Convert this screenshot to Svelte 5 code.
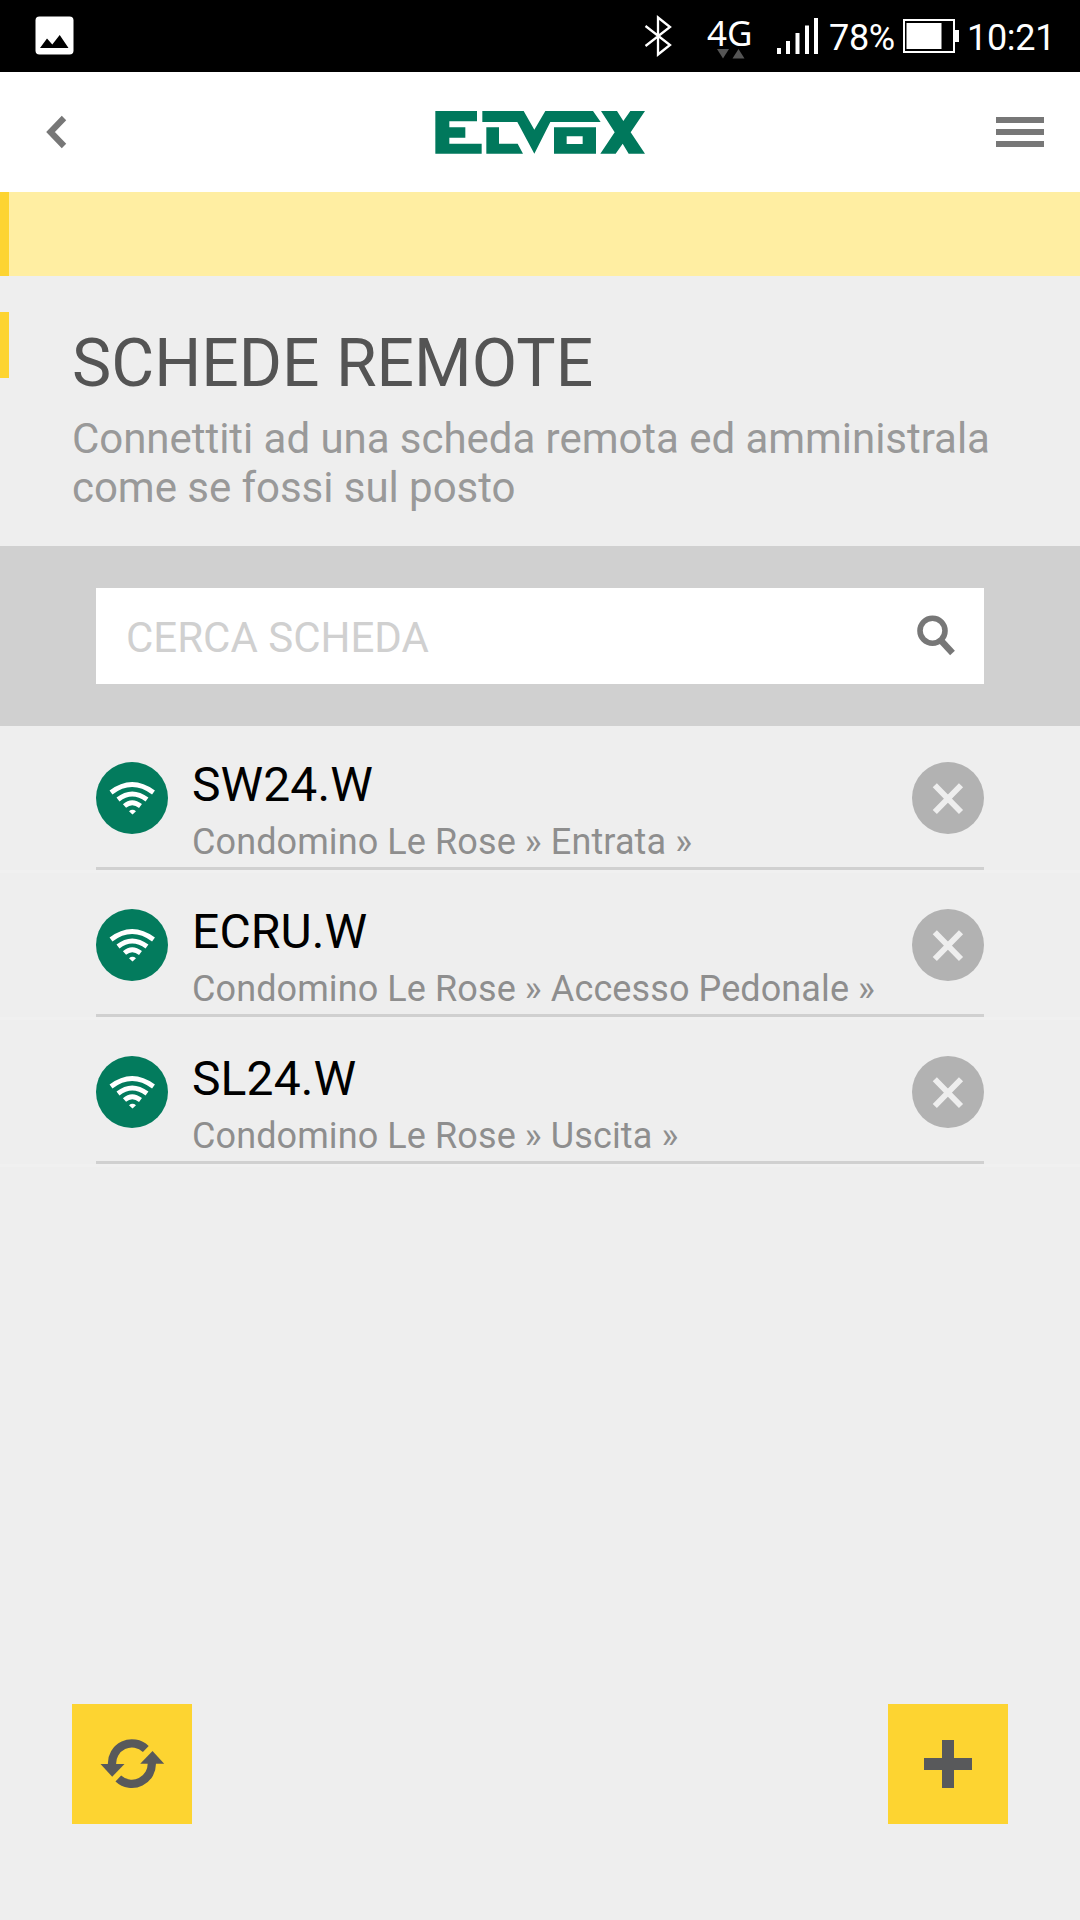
<script>
  const boards = [
    { name: 'SW24.W', place: 'Condomino Le Rose » Entrata »' },
    { name: 'ECRU.W', place: 'Condomino Le Rose » Accesso Pedonale »' },
    { name: 'SL24.W', place: 'Condomino Le Rose » Uscita »' }
  ];
</script>

<div class="screen">
  <div class="status">
    <svg class="picture" width="40" height="40" viewBox="0 0 40 40">
      <rect x="0.5" y="0.5" width="38" height="38" rx="4" fill="#fff" />
      <path d="M5 32L12 22.5L17.3 28.5L24.7 19L33.5 32Z" fill="#000" />
    </svg>
    <svg class="bluetooth" width="28" height="42" viewBox="0 0 28 42" fill="none" stroke="#fff" stroke-width="2.300">
      <path d="M1.500 11L26 30L14 39.500V2.500L26 12L1.500 31" />
    </svg>
    <div class="network">
      <span class="gen">4G</span>
      <svg class="arrows" width="28" height="10" viewBox="0 0 28 10" fill="#555">
        <path d="M0 0H12L6 9.500Z" />
        <path d="M15.500 9.500H27.500L21.500 0Z" />
      </svg>
    </div>
    <svg class="signal" width="42" height="36" viewBox="0 0 42 36" fill="#fff">
      <rect x="0" y="30" width="4" height="6" />
      <rect x="9" y="23" width="4" height="13" />
      <rect x="18.500" y="15" width="4" height="21" />
      <rect x="28" y="7.500" width="4" height="28.500" />
      <rect x="37" y="0" width="4" height="36" />
    </svg>
    <span class="percent">78%</span>
    <svg class="battery" width="56" height="34" viewBox="0 0 56 34">
      <rect x="1" y="1" width="50" height="32" fill="none" stroke="#fff" stroke-width="2" />
      <rect x="3.500" y="4" width="35" height="26" fill="#fff" />
      <rect x="52" y="11" width="4" height="12" fill="#fff" />
    </svg>
    <span class="clock">10:21</span>
  </div>

  <header>
    <svg class="back" width="24" height="36" viewBox="0 0 24 36" fill="none" stroke="#777" stroke-width="6.200">
      <path d="M20 4L6.500 18L20 32" />
    </svg>
    <svg class="logo" width="212" height="46" viewBox="44 60 636 138" fill="#00785c" role="img" aria-label="Elvox">
      <path d="M45 63H170V94H87V112H135V143H87V161H184V191H45Z" />
      <path d="M186 63H310L342 119L375 63H518L541 96H390L342 191L291 96H186Z" />
      <path d="M198 112H236V161H292L308 191H198Z" />
      <path fill-rule="evenodd" d="M401 112H527V191H401ZM439 139V162H487V139Z" />
      <path d="M542 63H590L609 93L630 63H674L631 127L674 191H625L607 161L586 191H540L583 127Z" />
    </svg>
    <svg class="menu" width="48" height="30" viewBox="0 0 48 30" fill="#777">
      <path d="M0 0H48V6H0ZM0 12H48V18H0ZM0 24H48V30H0Z" />
    </svg>
  </header>

  <div class="notice"></div>

  <section class="intro">
    <div class="marker"></div>
    <div class="copy">
      <h1>SCHEDE REMOTE</h1>
      <p>Connettiti ad una scheda remota ed amministrala<br />come se fossi sul posto</p>
    </div>
  </section>

  <div class="search">
    <div class="field">
      <span>CERCA SCHEDA</span>
      <svg width="40" height="42" viewBox="0 0 40 42" fill="none" stroke="#777">
        <circle cx="15.500" cy="15.700" r="12.500" stroke-width="5.600" />
        <path d="M23.500 25L35.500 38" stroke-width="6.500" />
      </svg>
    </div>
  </div>

  <div class="list">
    {#each boards as board}
      <div class="item">
        <div class="row">
          <svg width="72" height="72" viewBox="0 0 72 72">
            <circle cx="36" cy="36" r="36" fill="#037b5d" />
            <g fill="none" stroke="#fff" stroke-width="4.800">
              <path d="M15 30.500Q36 14.500 57.500 30.500" />
              <path d="M22 37.500Q36 26.500 51 37.500" />
              <path d="M28.500 44Q36 37.500 44.500 44" />
            </g>
            <path d="M33 49.200Q36.500 46.500 40 49.200L36.500 52.500Z" fill="#fff" />
          </svg>
          <div class="text">
            <div class="name">{board.name}</div>
            <div class="place">{board.place}</div>
          </div>
          <svg width="72" height="72" viewBox="0 0 72 72">
            <circle cx="36" cy="36" r="36" fill="#b2b2b2" />
            <path d="M22.800 23.300L49 50M49 23.300L22.800 50" stroke="#eee" stroke-width="5.800" />
          </svg>
        </div>
      </div>
    {/each}
  </div>

  <div class="actions">
    <div class="btn">
      <svg width="66" height="50" viewBox="-0.500 0 66 50">
        <g fill="none" stroke="#58595b" stroke-width="8.300">
          <path d="M46.300 10A19.900 19.900 0 0 0 12.600 26" />
          <path d="M18.800 39.500A19.900 19.900 0 0 0 52.200 23" />
        </g>
        <path d="M1 25H25L12.700 37.700Z" fill="#58595b" />
        <path d="M40.700 24.700H64.700L53 12Z" fill="#58595b" />
      </svg>
    </div>
    <div class="btn">
      <svg width="48" height="48" viewBox="0 0 48 48">
        <path d="M18 0H30V18H48V30H30V48H18V30H0V18H18Z" fill="#58595b" />
      </svg>
    </div>
  </div>
</div>

<style>
  :global(body) {
    margin: 0;
  }
  .screen {
    width: 1080px;
    height: 1920px;
    background: #eee;
    font-family: Roboto, sans-serif;
    display: flex;
    flex-direction: column;
    overflow: hidden;
  }
  svg {
    display: block;
    flex: none;
  }
  span {
    white-space: nowrap;
  }
  .status {
    height: 72px;
    background: #000;
    color: #fff;
    display: flex;
    align-items: flex-start;
    padding-left: 35px;
    flex: none;
  }
  .picture {
    margin-top: 16px;
  }
  .bluetooth {
    margin: 15px 0 0 569px;
  }
  .network {
    width: 46px;
    margin: 13px 0 0 35px;
    display: flex;
    flex-direction: column;
  }
  .gen {
    font: 35px/40px "Noto Sans", sans-serif;
    height: 36px;
  }
  .arrows {
    margin-left: 10px;
  }
  .signal {
    margin: 18px 0 0 24px;
  }
  .percent,
  .clock {
    font-size: 36px;
    line-height: 42px;
    margin-top: 17px;
  }
  .percent {
    width: 64px;
    margin-left: 10px;
    letter-spacing: -0.3px;
  }
  .battery {
    margin: 19px 0 0 10px;
  }
  .clock {
    margin-left: 8px;
    letter-spacing: -0.3px;
  }
  header {
    height: 120px;
    background: #fff;
    display: flex;
    align-items: flex-start;
    flex: none;
    padding-left: 44px;
  }
  .back {
    margin-top: 42px;
  }
  .logo {
    margin: 38px 0 0 367px;
  }
  .menu {
    margin: 45px 0 0 349px;
  }
  .notice {
    height: 84px;
    flex: none;
    box-sizing: border-box;
    background: #ffeea2;
    border-left: 9px solid #fdd431;
  }
  .intro {
    height: 270px;
    flex: none;
    display: flex;
  }
  .marker {
    width: 9px;
    height: 66px;
    margin-top: 36px;
    background: #fdd431;
  }
  .copy {
    margin: 49px 0 0 63px;
  }
  h1 {
    margin: 0;
    font-size: 66px;
    line-height: 78px;
    font-weight: 400;
    color: #545454;
  }
  p {
    margin: 11px 0 0;
    font-size: 42px;
    line-height: 49px;
    letter-spacing: -0.04px;
    color: #999;
    white-space: nowrap;
  }
  .search {
    height: 96px;
    padding: 42px 96px;
    background: #d0d0d0;
    flex: none;
  }
  .field {
    height: 96px;
    background: #fff;
    display: flex;
    align-items: center;
    justify-content: space-between;
    padding: 0 27px 0 30px;
    font-size: 42px;
    color: #d0d0d0;
  }
  .field span {
    padding-top: 2px;
  }
  .item {
    height: 144px;
    padding: 0 96px;
    border-bottom: 3px solid #f0f0f0;
  }
  .row {
    height: 141px;
    border-bottom: 3px solid #d0d0d0;
    display: flex;
  }
  .row svg {
    margin-top: 36px;
  }
  .text {
    flex: 1;
    padding: 31px 0 0 24px;
    white-space: nowrap;
  }
  .name {
    font-size: 48px;
    line-height: 56px;
    letter-spacing: 0.1px;
    color: #000;
  }
  .place {
    margin-top: 8px;
    font-size: 36px;
    line-height: 42px;
    letter-spacing: 0.1px;
    color: #8e8e8e;
  }
  .actions {
    margin-top: auto;
    padding: 0 72px 96px;
    display: flex;
    justify-content: space-between;
  }
  .btn {
    width: 120px;
    height: 120px;
    background: #fdd431;
    display: flex;
    align-items: center;
    justify-content: center;
  }
</style>
